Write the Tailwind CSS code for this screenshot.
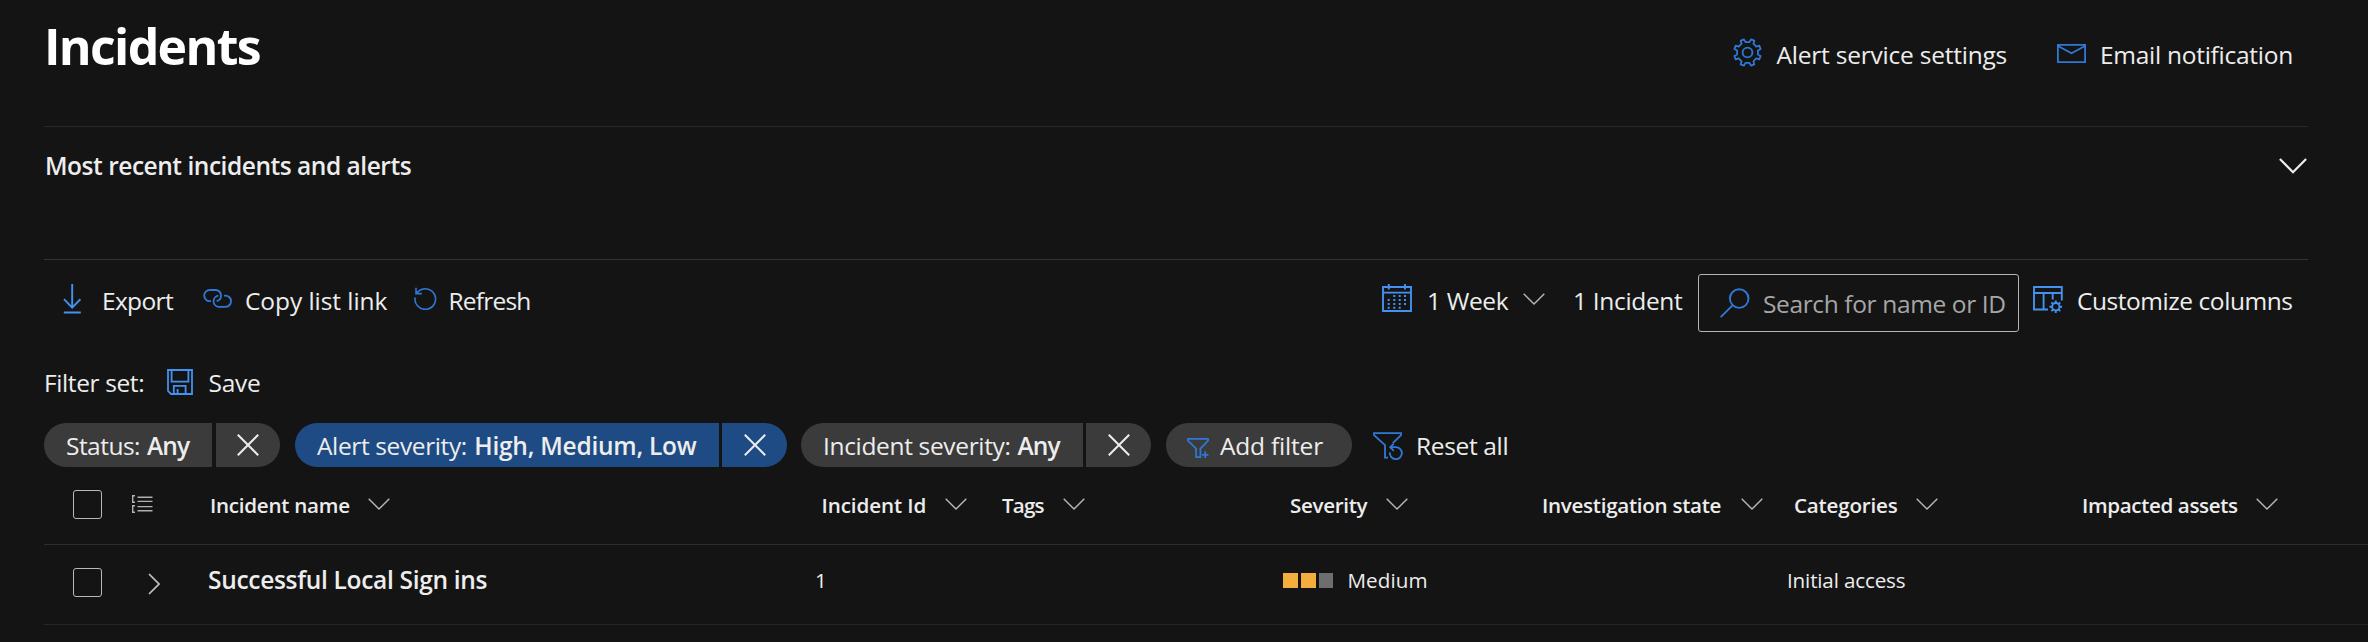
<!DOCTYPE html>
<html lang="en">
<head>
<meta charset="utf-8">
<title>Incidents</title>
<script src="https://cdn.jsdelivr.net/npm/@tailwindcss/browser@4"></script>
</head>
<body class="w-[2368px] h-[642px] overflow-hidden bg-[#141414] text-[#ededed] font-['Open_Sans','Noto_Sans',sans-serif] text-[24.5px] leading-none whitespace-nowrap antialiased">
<svg class="hidden">
  <symbol id="chev" viewBox="0 0 22 12"><path d="M.7.7 11 11 21.3.7" fill="none" stroke="currentColor" stroke-width="1.4"/></symbol>
  <symbol id="close" viewBox="0 0 22 22"><path d="M.8.8 21.2 21.2M21.2.8.8 21.2" fill="none" stroke="currentColor" stroke-width="2"/></symbol>
</svg>

<!-- Page header -->
<header class="h-[127px] border-b border-[#292929] ml-11 mr-[60px] grid grid-cols-[1689px_43.5px_280.5px_43px_auto] items-start">
  <h1 class="h-[91px] flex items-center text-[50px] font-bold text-white tracking-[-1.68px]">Incidents</h1>
  <div class="h-[105px] flex items-center text-[#2f78d6]">
    <svg class="w-[29px] h-[29px]" viewBox="-14.5 -14.5 29 29" fill="none" stroke="currentColor" stroke-width="1.8" stroke-linejoin="round"><path d="M2-10.4 3.5-13.1 6.8-11.8 5.9-8.8 8.8-5.9 11.8-6.8 13.1-3.5 10.4-2V2L13.1 3.5 11.8 6.8 8.8 5.9 5.9 8.8 6.8 11.8 3.5 13.1 2 10.4H-2L-3.5 13.1-6.8 11.8-5.9 8.8-8.8 5.9-11.8 6.8-13.1 3.5-10.4 2V-2L-13.1-3.5-11.8-6.8-8.8-5.9-5.9-8.8-6.8-11.8-3.5-13.1-2-10.4Z"/><circle r="4.9"/></svg>
  </div>
  <span class="h-[111px] flex items-center tracking-[-0.22px]">Alert service settings</span>
  <div class="h-[106px] flex items-center text-[#2f78d6]">
    <svg class="w-[29px] h-[19px]" viewBox="0 0 29 19" fill="none" stroke="currentColor" stroke-width="1.8"><path d="M.9.9H28.1V18.1H.9ZM1 2 14.5 9.3 28 2"/></svg>
  </div>
  <span class="h-[111px] flex items-center tracking-[-0.27px]">Email notification</span>
</header>

<!-- Collapsed summary -->
<section class="h-[133px] border-b border-[#333] ml-11 mr-[60px]">
  <div class="h-[77px] flex items-center justify-between">
    <h2 class="mt-0.5 ml-px font-semibold tracking-[-0.47px]">Most recent incidents and alerts</h2>
    <svg class="w-7 h-4 mr-px" viewBox="0 0 28 16" fill="none" stroke="currentColor" stroke-width="2.2"><path d="M.9.9 14 14.2 27.1.9"/></svg>
  </div>
</section>

<!-- Toolbar -->
<div class="h-[86px] pl-[63px] grid grid-cols-[39px_101px_42px_169px_34.5px_933.5px_45px_96px_50px_125px_335px_44px_auto] items-start">
  <div class="h-[77px] flex items-center text-[#4391f1]"><svg class="w-[18px] h-[30px]" viewBox="0 0 18 30" fill="none" stroke="currentColor" stroke-width="1.9"><path d="M9.2 0V23.5M1 15.2 9.2 23.6 17.4 15.2M.8 28.5H17.8"/></svg></div>
  <span class="h-[83px] flex items-center tracking-[-0.66px]">Export</span>
  <div class="h-[77px] flex items-center text-[#2f78d6]"><svg class="w-[29px] h-[19px]" viewBox="0 0 29 19" fill="none" stroke="currentColor" stroke-width="1.8"><path d="M8 12.2H6.8A5.6 5.6 0 0 1 6.8 1H13A5.7 5.7 0 0 1 13.6 12.2"/><path d="M15.5 6.6A5.7 5.7 0 0 0 15.5 17.9H22.4A5.6 5.6 0 0 0 22.4 6.6H21"/></svg></div>
  <span class="h-[83px] flex items-center tracking-[-0.06px]">Copy list link</span>
  <div class="h-[77px] flex items-center text-[#2f78d6]"><svg class="w-[23px] h-[23px]" viewBox="0 0 23 23" fill="none" stroke="currentColor" stroke-width="1.6"><path d="M1.1 10.3A10.3 10.3 0 1 0 5.2 3.7L2.3 6.4M2 .8V6.6H7.8"/></svg></div>
  <span class="h-[83px] flex items-center tracking-[-0.8px]">Refresh</span>
  <div class="h-[76px] flex items-center text-[#4391f1]"><svg class="w-[30px] h-7" viewBox="0 0 30 28" fill="none" stroke="currentColor" stroke-width="1.9"><path d="M1 3H29V27H1ZM1 8.6H29M6.8 0V5.5M23 0V5.5"/><g stroke-width="2" stroke-dasharray="2 1.9"><path d="M6.7 15V24.8M12.3 11.1V24.8M17.7 11.1V24.8M23 11.1V21"/></g></svg></div>
  <span class="h-[83px] flex items-center tracking-[-0.37px]">1 Week</span>
  <div class="h-[78px] flex items-center text-[#b8b8b8]"><svg class="w-[22px] h-3"><use href="#chev"/></svg></div>
  <span class="h-[83px] flex items-center tracking-[-0.32px]">1 Incident</span>
  <div class="h-[86px] flex items-center">
    <div class="w-[321px] h-[58px] border border-[#b5b5b5] rounded-[3px] flex items-center pl-[21px]">
      <svg class="w-[30px] h-[30px] text-[#2f78d6]" viewBox="0 0 30 30" fill="none" stroke="currentColor" stroke-width="1.9"><circle cx="19.2" cy="10.6" r="9.3"/><path d="M12.5 17.3.7 29.2"/></svg>
      <span class="mt-0.5 ml-[13px] text-[#a6a6a6] tracking-[-0.37px]">Search for name or ID</span>
    </div>
  </div>
  <div class="h-[80px] flex items-center text-[#4391f1]"><svg class="w-[30px] h-7" viewBox="0 0 30 28" fill="none" stroke="currentColor" stroke-width="1.9"><path d="M15 23.5H1V1H28.8V14.5M1 7H28.8M10.6 7V23.5M19.7 7V13.5"/><circle cx="22.8" cy="20.7" r="3.7"/><path d="M22.8 17V14.4M22.8 24.4V27M19.1 20.7H16.5M26.5 20.7H29.1M20.2 18.1 18.4 16.3M25.4 18.1 27.2 16.3M20.2 23.3 18.4 25.1M25.4 23.3 27.2 25.1"/></svg></div>
  <span class="h-[83px] flex items-center tracking-[-0.45px]">Customize columns</span>
</div>

<!-- Filter set -->
<div class="h-[73px] pl-11 grid grid-cols-[123px_41.5px_auto] items-center">
  <span class="mt-0.5 tracking-[-0.39px]">Filter set:</span>
  <svg class="w-[26px] h-[26px] text-[#4391f1] -mt-[1px]" viewBox="0 0 26 26" fill="none" stroke="currentColor" stroke-width="1.8"><path d="M1 1H25V25H4L1 22ZM4.6 1V12.6H21.4V1M6.8 25V16.8H18.6V25M10.6 20V25"/></svg>
  <span class="mt-0.5 tracking-[-0.27px]">Save</span>
</div>

<!-- Filter pills -->
<div class="h-12 pt-1 pl-11 flex">
  <div class="w-[168px] h-11 rounded-l-[22px] bg-[#3b3b3b] flex items-center pl-[22px] pt-0.5"><span class="w-[81px] tracking-[-0.53px]">Status:</span><b class="font-semibold tracking-[-0.9px]">Any</b></div>
  <button class="ml-1 w-16 h-11 rounded-r-[22px] bg-[#3b3b3b] flex items-center justify-center"><svg class="w-[22px] h-[22px]"><use href="#close"/></svg></button>
  <div class="ml-[15px] w-[424px] h-11 rounded-l-[22px] bg-[#1e4b83] flex items-center pl-[22px] pt-0.5"><span class="w-[157.3px] tracking-[-0.38px]">Alert severity:</span><b class="font-semibold tracking-[-0.25px]">High, Medium, Low</b></div>
  <button class="ml-[3px] w-[65px] h-11 rounded-r-[22px] bg-[#1e4b83] flex items-center justify-center"><svg class="w-[22px] h-[22px]"><use href="#close"/></svg></button>
  <div class="ml-[14px] w-[282px] h-11 rounded-l-[22px] bg-[#3b3b3b] flex items-center pl-[22px] pt-0.5"><span class="w-[194.5px] tracking-[-0.34px]">Incident severity:</span><b class="font-semibold tracking-[-0.9px]">Any</b></div>
  <button class="ml-[3px] w-[65px] h-11 rounded-r-[22px] bg-[#3b3b3b] flex items-center justify-center"><svg class="w-[22px] h-[22px]"><use href="#close"/></svg></button>
  <div class="ml-[15px] w-[186px] h-11 rounded-[22px] bg-[#3b3b3b] flex items-center pl-[21px]">
    <svg class="w-[22px] h-5 mt-1.5 text-[#2f78d6]" viewBox="0 0 22 20" fill="none" stroke="currentColor" stroke-width="1.7"><path d="M.9.9H21.1V2.6L13.4 10.6V19.1H9.1V10.6L.9 2.6ZM18.2 13.6V20M15 16.8H21.4"/></svg>
    <span class="mt-0.5 ml-[11px] tracking-[-0.2px]">Add filter</span>
  </div>
  <div class="ml-[21px] h-11 flex items-center">
    <svg class="w-[30px] h-7 mt-0.5 text-[#3079d8]" viewBox="0 0 30 28" fill="none" stroke="currentColor" stroke-width="1.8"><path d="M15 25.6H12V13.2L1 3.2V1.2H28V3.2L19.8 11.2"/><path d="M16.9 20.4A6 6 0 1 0 23 15.2H17.5M20.8 11.6 17.2 15.2 20.8 18.8"/></svg>
    <span class="mt-0.5 ml-[13px] tracking-[-0.35px]">Reset all</span>
  </div>
</div>

<!-- Table header -->
<div class="h-[78px] ml-11 border-b border-[#2e2e2e] text-[20.6px] font-semibold">
  <div class="h-[76px] pl-[29px] grid grid-cols-[59px_78px_157.5px_454px_123px_57.5px_61px_227px_96px_156px_199px_53px_122px_166px_174px_auto] items-center">
    <div class="w-[29px] h-[29px] border border-[#b8b8b8] rounded-[3px] -mt-px"></div>
    <svg class="w-[21px] h-[18px] text-[#b0b0b0] -mt-[3px]" viewBox="0 0 21 18" fill="none" stroke="currentColor" stroke-width="1.4"><path d="M3 .8H.7V7.2H3M3 10.8H.7V17.2H3M5.5 2.2H20.5M5.5 6.4H20.5M5.5 11.6H20.5M5.5 15.8H20.5"/></svg>
    <span class="tracking-[-0.26px]">Incident name</span>
    <svg class="w-[22px] h-3 -mt-[3px] text-[#b8b8b8]"><use href="#chev"/></svg>
    <span class="tracking-[-0.1px]">Incident Id</span>
    <svg class="w-[22px] h-3 -mt-[3px] text-[#b8b8b8]"><use href="#chev"/></svg>
    <span class="tracking-[-0.8px]">Tags</span>
    <svg class="w-[22px] h-3 -mt-[3px] text-[#b8b8b8]"><use href="#chev"/></svg>
    <span class="tracking-[-0.34px]">Severity</span>
    <svg class="w-[22px] h-3 -mt-[3px] text-[#b8b8b8]"><use href="#chev"/></svg>
    <span class="tracking-[-0.28px]">Investigation state</span>
    <svg class="w-[22px] h-3 -mt-[3px] text-[#b8b8b8]"><use href="#chev"/></svg>
    <span class="tracking-[-0.19px]">Categories</span>
    <svg class="w-[22px] h-3 -mt-[3px] text-[#b8b8b8]"><use href="#chev"/></svg>
    <span class="tracking-[-0.36px]">Impacted assets</span>
    <svg class="w-[22px] h-3 -mt-[3px] text-[#b8b8b8]"><use href="#chev"/></svg>
  </div>
</div>

<!-- Incident row -->
<div class="h-20 ml-11 border-b border-[#262626] text-[20.6px]">
  <div class="h-[70px] pl-[29px] grid grid-cols-[75px_60px_607px_468px_64.5px_439.5px_auto] items-center">
    <div class="w-[29px] h-[29px] border border-[#b8b8b8] rounded-[3px] mt-[5px]"></div>
    <svg class="w-3 h-[22px] mt-2 text-[#c4c4c4]" viewBox="0 0 12 22" fill="none" stroke="currentColor" stroke-width="1.7"><path d="M1 1 11 11 1 21"/></svg>
    <span class="mt-px text-[24.5px] font-semibold tracking-[-0.31px]">Successful Local Sign ins</span>
    <span>1</span>
    <div class="flex gap-[3.5px]"><i class="w-[14.5px] h-[15px] bg-[#f4ae3e]"></i><i class="w-[14.5px] h-[15px] bg-[#f4ae3e]"></i><i class="w-3.5 h-[15px] bg-[#6e6e6e]"></i></div>
    <span class="tracking-[0.1px]">Medium</span>
    <span class="tracking-[-0.15px]">Initial access</span>
  </div>
</div>
</body>
</html>
